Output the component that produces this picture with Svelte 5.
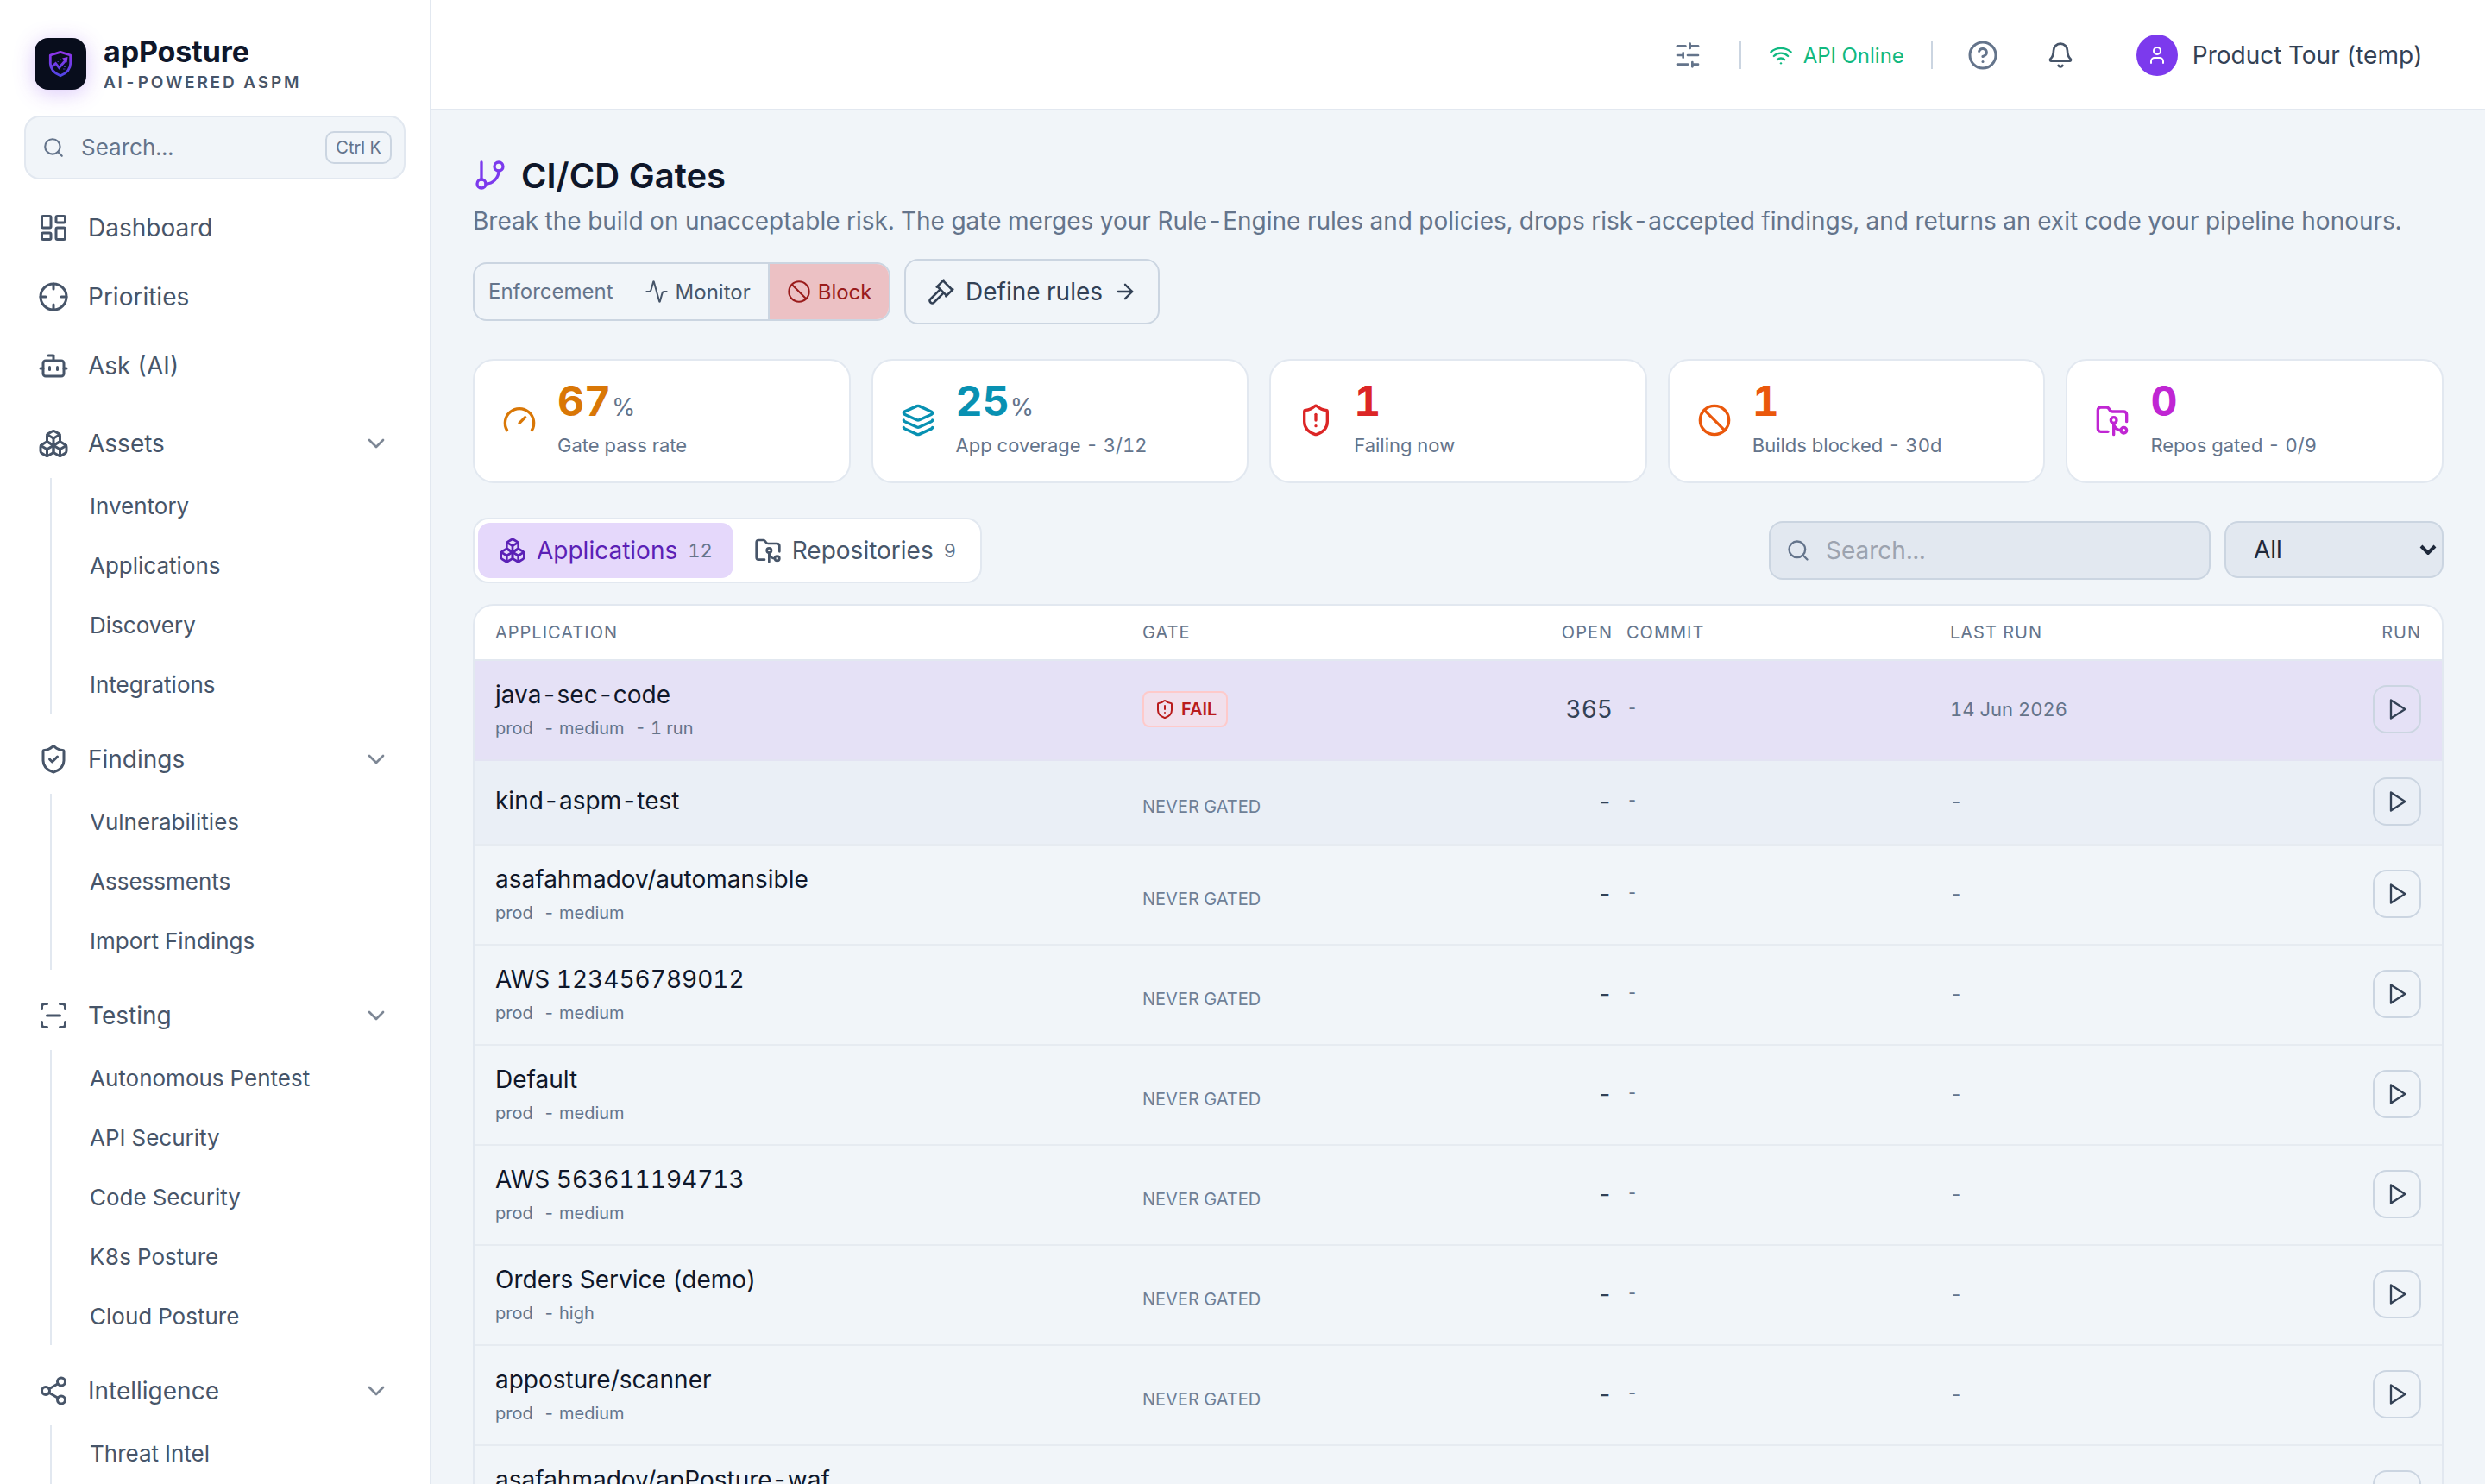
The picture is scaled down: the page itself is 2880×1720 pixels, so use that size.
<script lang="ts">
	type IconDef = string[];

	const SHIELD =
		'M20 13c0 5-3.5 7.5-7.66 8.95a1 1 0 0 1-.67-.01C7.5 20.5 4 18 4 13V6a1 1 0 0 1 1-1c2 0 4.5-1.2 6.24-2.72a1.17 1.17 0 0 1 1.52 0C14.51 3.81 17 5 19 5a1 1 0 0 1 1 1z';

	const circle = (cx: number, cy: number, r: number) =>
		`M${cx - r} ${cy}a${r} ${r} 0 1 0 ${2 * r} 0a${r} ${r} 0 1 0 ${-2 * r} 0`;

	const icons: Record<string, IconDef> = {
		search: [circle(11, 11, 8), 'm21 21-4.3-4.3'],
		dashboard: [
			'M4 3h5a1 1 0 0 1 1 1v7a1 1 0 0 1-1 1H4a1 1 0 0 1-1-1V4a1 1 0 0 1 1-1z',
			'M15 3h5a1 1 0 0 1 1 1v3a1 1 0 0 1-1 1h-5a1 1 0 0 1-1-1V4a1 1 0 0 1 1-1z',
			'M15 12h5a1 1 0 0 1 1 1v7a1 1 0 0 1-1 1h-5a1 1 0 0 1-1-1v-7a1 1 0 0 1 1-1z',
			'M4 16h5a1 1 0 0 1 1 1v3a1 1 0 0 1-1 1H4a1 1 0 0 1-1-1v-3a1 1 0 0 1 1-1z'
		],
		crosshair: [circle(12, 12, 10), 'M22 12h-4', 'M6 12H2', 'M12 6V2', 'M12 22v-4'],
		bot: [
			'M12 8V4H8',
			'M6 8h12a2 2 0 0 1 2 2v8a2 2 0 0 1-2 2H6a2 2 0 0 1-2-2v-8a2 2 0 0 1 2-2z',
			'M2 14h2',
			'M20 14h2',
			'M15 13v2',
			'M9 13v2'
		],
		boxes: [
			'M2.97 12.92A2 2 0 0 0 2 14.63v3.24a2 2 0 0 0 .97 1.71l3 1.8a2 2 0 0 0 2.06 0L12 19v-5.5l-5-3-4.03 2.42Z',
			'm7 16.5-4.74-2.85',
			'm7 16.5 5-3',
			'M7 16.5v5.17',
			'M12 13.5V19l3.97 2.38a2 2 0 0 0 2.06 0l3-1.8a2 2 0 0 0 .97-1.71v-3.24a2 2 0 0 0-.97-1.71L17 10.5l-5 3Z',
			'm17 16.5-5-3',
			'm17 16.5 4.74-2.85',
			'M17 16.5v5.17',
			'M7.97 4.42A2 2 0 0 0 7 6.13v4.37l5 3 5-3V6.13a2 2 0 0 0-.97-1.71l-3-1.8a2 2 0 0 0-2.06 0l-3 1.8Z',
			'M12 8 7.26 5.15',
			'm12 8 4.74-2.85',
			'M12 13.5V8'
		],
		shieldCheck: [SHIELD, 'm9 12 2 2 4-4'],
		shieldAlert: [SHIELD, 'M12 8v4', 'M12 16h.01'],
		scan: [
			'M3 7V5a2 2 0 0 1 2-2h2',
			'M17 3h2a2 2 0 0 1 2 2v2',
			'M21 17v2a2 2 0 0 1-2 2h-2',
			'M7 21H5a2 2 0 0 1-2-2v-2',
			'M7 12h10'
		],
		share: [
			circle(18, 5, 3),
			circle(6, 12, 3),
			circle(18, 19, 3),
			'M8.59 13.51l6.83 3.98',
			'M15.41 6.51l-6.82 3.98'
		],
		chevronDown: ['m6 9 6 6 6-6'],
		sliders: ['M21 4h-7', 'M10 4H3', 'M21 12h-9', 'M8 12H3', 'M21 20h-5', 'M12 20H3', 'M14 2v4', 'M8 10v4', 'M16 18v4'],
		wifi: ['M12 20h.01', 'M2 8.82a15 15 0 0 1 20 0', 'M5 12.859a10 10 0 0 1 14 0', 'M8.5 16.429a5 5 0 0 1 7 0'],
		help: [circle(12, 12, 10), 'M9.09 9a3 3 0 0 1 5.83 1c0 2-3 3-3 3', 'M12 17h.01'],
		bell: [
			'M10.268 21a2 2 0 0 0 3.464 0',
			'M3.262 15.326A1 1 0 0 0 4 17h16a1 1 0 0 0 .74-1.673C19.41 13.956 18 12.499 18 8A6 6 0 0 0 6 8c0 4.499-1.411 5.956-2.738 7.326'
		],
		user: ['M19 21v-2a4 4 0 0 0-4-4H9a4 4 0 0 0-4 4v2', circle(12, 7, 4)],
		branch: ['M6 3v12', circle(18, 6, 3), circle(6, 18, 3), 'M18 9a9 9 0 0 1-9 9'],
		activity: [
			'M22 12h-2.48a2 2 0 0 0-1.93 1.46l-2.35 8.36a.25.25 0 0 1-.48 0L9.24 2.18a.25.25 0 0 0-.48 0l-2.35 8.36A2 2 0 0 1 4.49 12H2'
		],
		ban: [circle(12, 12, 10), 'm4.9 4.9 14.2 14.2'],
		gavel: [
			'm14 13-8.381 8.38a1 1 0 0 1-3.001-3l8.384-8.381',
			'm16 16 6-6',
			'm21.5 10.5-8-8',
			'm8 8 6-6',
			'm8.5 7.5 8 8'
		],
		arrowRight: ['M5 12h14', 'm12 5 7 7-7 7'],
		gauge: ['m12 14 4-4', 'M3.34 19a10 10 0 1 1 17.32 0'],
		layers: [
			'M12.83 2.18a2 2 0 0 0-1.66 0L2.6 6.08a1 1 0 0 0 0 1.83l8.58 3.91a2 2 0 0 0 1.66 0l8.58-3.9a1 1 0 0 0 0-1.83z',
			'M2 12a1 1 0 0 0 .58.91l8.6 3.91a2 2 0 0 0 1.65 0l8.58-3.9A1 1 0 0 0 22 12',
			'M2 17a1 1 0 0 0 .58.91l8.6 3.91a2 2 0 0 0 1.65 0l8.58-3.9A1 1 0 0 0 22 17'
		],
		folderGit: [
			'M9 20H4a2 2 0 0 1-2-2V5a2 2 0 0 1 2-2h3.9a2 2 0 0 1 1.69.9l.81 1.2a2 2 0 0 0 1.67.9H20a2 2 0 0 1 2 2v5',
			circle(13, 12, 2),
			'M18 19c-2.8 0-5-2.2-5-5v8',
			circle(20, 19, 2)
		],
		play: ['M6 3l14 9-14 9z']
	};

	const topLinks = [
		{ label: 'Dashboard', icon: 'dashboard' },
		{ label: 'Priorities', icon: 'crosshair' },
		{ label: 'Ask (AI)', icon: 'bot' }
	];

	const groups = [
		{ label: 'Assets', icon: 'boxes', items: ['Inventory', 'Applications', 'Discovery', 'Integrations'] },
		{ label: 'Findings', icon: 'shieldCheck', items: ['Vulnerabilities', 'Assessments', 'Import Findings'] },
		{
			label: 'Testing',
			icon: 'scan',
			items: ['Autonomous Pentest', 'API Security', 'Code Security', 'K8s Posture', 'Cloud Posture']
		},
		{ label: 'Intelligence', icon: 'share', items: ['Threat Intel'] }
	];

	const stats = [
		{ value: '67', unit: '%', label: 'Gate pass rate', icon: 'gauge', tone: 'amber' },
		{ value: '25', unit: '%', label: 'App coverage - 3/12', icon: 'layers', tone: 'cyan' },
		{ value: '1', unit: '', label: 'Failing now', icon: 'shieldAlert', tone: 'red' },
		{ value: '1', unit: '', label: 'Builds blocked - 30d', icon: 'ban', tone: 'orange' },
		{ value: '0', unit: '', label: 'Repos gated - 0/9', icon: 'folderGit', tone: 'fuchsia' }
	];

	type AppRow = {
		name: string;
		meta: string[];
		failed?: boolean;
		open?: string;
		lastRun?: string;
	};

	const rows: AppRow[] = [
		{ name: 'java-sec-code', meta: ['prod', '- medium', '- 1 run'], failed: true, open: '365', lastRun: '14 Jun 2026' },
		{ name: 'kind-aspm-test', meta: [] },
		{ name: 'asafahmadov/automansible', meta: ['prod', '- medium'] },
		{ name: 'AWS 123456789012', meta: ['prod', '- medium'] },
		{ name: 'Default', meta: ['prod', '- medium'] },
		{ name: 'AWS 563611194713', meta: ['prod', '- medium'] },
		{ name: 'Orders Service (demo)', meta: ['prod', '- high'] },
		{ name: 'apposture/scanner', meta: ['prod', '- medium'] },
		{ name: 'asafahmadov/apPosture-waf', meta: ['prod', '- medium'] }
	];

	let selected = $state(0);
	let tab = $state('applications');
</script>

{#snippet icon(name: string, size: number, stroke = 2)}
	<svg
		class="icon"
		width={size}
		height={size}
		viewBox="0 0 24 24"
		fill="none"
		stroke="currentColor"
		stroke-width={stroke}
		stroke-linecap="round"
		stroke-linejoin="round"
		aria-hidden="true"
	>
		{#each icons[name] as d}
			<path {d} />
		{/each}
	</svg>
{/snippet}

<div class="shell">
	<aside class="sidebar">
		<div class="brand">
			<div class="brand-mark">
				<svg width="60" height="60" viewBox="0 0 60 60" fill="none" aria-hidden="true">
					<defs>
						<linearGradient id="mark" x1="30" y1="15" x2="30" y2="45" gradientUnits="userSpaceOnUse">
							<stop offset="0" stop-color="#9333ea" />
							<stop offset="1" stop-color="#4f46e5" />
						</linearGradient>
					</defs>
					<path
						d="M30 16.3 41.7 20v9.5c0 6.8-4.6 11.3-11.7 14.3-7.1-3-11.7-7.5-11.7-14.3V20z"
						stroke="url(#mark)"
						stroke-width="2.8"
						stroke-linejoin="round"
					/>
					<path d="m20 33.5 4.5-4 4 5 7.5-8.5" stroke="url(#mark)" stroke-width="2.8" />
					<path d="m32 23.5 6.5-1.5-1 6.5z" fill="#8b3cf0" />
					<path d="M26.5 27.5H28m1.5-2.5H31m3 8.5h3m-4 2.5h2.5" stroke="#4338a8" stroke-width="1.2" />
				</svg>
			</div>
			<div class="brand-text">
				<div class="brand-name">apPosture</div>
				<div class="brand-sub">AI-POWERED ASPM</div>
			</div>
		</div>

		<button class="side-search">
			{@render icon('search', 26)}
			<span class="side-search-label">Search...</span>
			<kbd>Ctrl K</kbd>
		</button>

		<nav class="nav">
			{#each topLinks as link}
				<a class="nav-item" href="#top">
					{@render icon(link.icon, 36)}
					<span>{link.label}</span>
				</a>
			{/each}

			{#each groups as group}
				<div class="nav-group">
					<button class="nav-item">
						{@render icon(group.icon, 36)}
						<span>{group.label}</span>
						<span class="nav-chevron">{@render icon('chevronDown', 32)}</span>
					</button>
					<div class="nav-list">
						{#each group.items as item}
							<a class="nav-sub" href="#top">{item}</a>
						{/each}
					</div>
				</div>
			{/each}
		</nav>
	</aside>

	<div class="content">
		<header class="topbar">
			<button class="bar-btn" aria-label="Preferences">{@render icon('sliders', 32)}</button>
			<span class="bar-sep"></span>
			<span class="api-status">
				{@render icon('wifi', 28)}
				API Online
			</span>
			<span class="bar-sep"></span>
			<button class="bar-btn help" aria-label="Help">{@render icon('help', 36)}</button>
			<button class="bar-btn bell" aria-label="Notifications">{@render icon('bell', 32)}</button>
			<div class="account">
				<span class="avatar">{@render icon('user', 24)}</span>
				<span>Product Tour (temp)</span>
			</div>
		</header>

		<main class="page">
			<h1 class="title">
				<span class="title-icon">{@render icon('branch', 40)}</span>
				CI/CD Gates
			</h1>
			<p class="lead">
				Break the build on unacceptable risk. The gate merges your Rule-Engine rules and policies, drops
				risk-accepted findings, and returns an exit code your pipeline honours.
			</p>

			<div class="actions">
				<div class="enforce">
					<span class="enforce-label">Enforcement</span>
					<button class="enforce-btn">{@render icon('activity', 28, 1.75)} Monitor</button>
					<button class="enforce-btn enforce-block">{@render icon('ban', 28, 1.75)} Block</button>
				</div>
				<button class="define">
					{@render icon('gavel', 32, 1.9)}
					<span>Define rules</span>
					{@render icon('arrowRight', 28)}
				</button>
			</div>

			<section class="stats">
				{#each stats as stat}
					<div class="stat">
						<span class={stat.tone}>{@render icon(stat.icon, 40)}</span>
						<div>
							<div class="stat-value {stat.tone}">{stat.value}<span class="stat-unit">{stat.unit}</span></div>
							<div class="stat-label">{stat.label}</div>
						</div>
					</div>
				{/each}
			</section>

			<div class="toolbar">
				<div class="tabs">
					<button class="tab" class:active={tab === 'applications'} onclick={() => (tab = 'applications')}>
						{@render icon('boxes', 32)}
						Applications <span class="tab-count">12</span>
					</button>
					<button class="tab" class:active={tab === 'repositories'} onclick={() => (tab = 'repositories')}>
						{@render icon('folderGit', 32)}
						Repositories <span class="tab-count">9</span>
					</button>
				</div>
				<div class="filters">
					<label class="filter-search">
						{@render icon('search', 28)}
						<input type="text" placeholder="Search..." />
					</label>
					<button class="filter-select">
						<span>All</span>
						<svg width="20" height="12" viewBox="0 0 20 12" fill="none" aria-hidden="true">
							<path d="m2 2 8 8 8-8" stroke="currentColor" stroke-width="4" />
						</svg>
					</button>
				</div>
			</div>

			<div class="table">
				<div class="row head">
					<span>Application</span>
					<span>Gate</span>
					<span class="right">Open</span>
					<span class="commit">Commit</span>
					<span>Last run</span>
					<span class="right">Run</span>
				</div>
				{#each rows as row, i}
					<div class="row body" class:selected={selected === i} class:hovered={i === 1} class:short={!row.meta.length}>
						<div class="app">
							<div class="app-name">{row.name}</div>
							{#if row.meta.length}
								<div class="app-meta">
									{#each row.meta as part}
										<span>{part}</span>
									{/each}
								</div>
							{/if}
						</div>
						<div>
							{#if row.failed}
								<span class="badge-fail">{@render icon('shieldAlert', 24)} FAIL</span>
							{:else}
								<span class="never">NEVER GATED</span>
							{/if}
						</div>
						<div class="right open">{row.open ?? '-'}</div>
						<div class="commit commit-value">-</div>
						<div class="date">{row.lastRun ?? '-'}</div>
						<div class="right">
							<button class="run" aria-label={`Run gate for ${row.name}`} onclick={() => (selected = i)}>
								{@render icon('play', 28)}
							</button>
						</div>
					</div>
				{/each}
			</div>
		</main>
	</div>
</div>

<style>
	:global(body) {
		margin: 0;
		background: #f1f5f9;
	}

	.shell {
		display: flex;
		width: 2880px;
		height: 1720px;
		overflow: hidden;
		font-family: Inter, 'Liberation Sans', sans-serif;
		font-size: 28px;
		font-variant-numeric: tabular-nums;
		color: #0f172a;
		background: #f1f5f9;
	}

	button {
		font: inherit;
		font-variant-numeric: inherit;
		color: inherit;
		background: none;
		border: 0;
		padding: 0;
		margin: 0;
		white-space: nowrap;
		cursor: pointer;
	}

	.icon {
		display: block;
		flex: none;
	}

	/* sidebar */
	.sidebar {
		box-sizing: border-box;
		flex: none;
		width: 500px;
		height: 100%;
		padding: 44px 28px 0;
		background: #fff;
		border-right: 2px solid #e2e8f0;
		overflow: hidden;
	}

	.brand {
		display: flex;
		gap: 20px;
		height: 90px;
		padding-left: 12px;
	}

	.brand-mark {
		width: 60px;
		height: 60px;
		border-radius: 16px;
		background: #080d1c;
		box-shadow: 0 4px 24px rgba(124, 58, 237, 0.28);
	}

	.brand-name {
		height: 38px;
		margin-top: -3px;
		font-size: 34px;
		line-height: 38px;
		font-weight: 700;
		letter-spacing: -0.1px;
	}

	.brand-sub {
		margin-top: 5px;
		font-size: 19px;
		line-height: 24px;
		font-weight: 600;
		letter-spacing: 2.8px;
		color: #475569;
	}

	.side-search {
		box-sizing: border-box;
		display: flex;
		align-items: center;
		width: 442px;
		height: 74px;
		padding: 0 14px 0 19px;
		border: 2px solid #e2e8f0;
		border-radius: 18px;
		background: #f1f5f9;
		color: #64748b;
		font-size: 26px;
	}

	.side-search-label {
		margin-left: 19px;
		margin-right: auto;
		padding-bottom: 2px;
	}

	kbd {
		box-sizing: border-box;
		height: 38px;
		padding: 0 10px;
		border: 2px solid #cbd5e1;
		border-radius: 10px;
		font-family: inherit;
		font-size: 20px;
		line-height: 35px;
	}

	.nav {
		padding-top: 16px;
	}

	.nav-item {
		display: flex;
		align-items: center;
		gap: 22px;
		width: 426px;
		height: 80px;
		padding-left: 16px;
		color: #475569;
		text-decoration: none;
	}

	.nav-group {
		margin-top: 10px;
		padding-bottom: 3px;
	}

	.nav-chevron {
		margin-left: auto;
		margin-right: 2px;
		opacity: 0.7;
	}

	.nav-list {
		display: flex;
		flex-direction: column;
		gap: 3px;
		margin-left: 30px;
		padding-left: 44px;
		border-left: 2px solid #e2e8f0;
	}

	.nav-group:last-child .nav-list {
		min-height: 140px;
	}

	.nav-sub {
		height: 66px;
		font-size: 26px;
		line-height: 65px;
		color: #475569;
		text-decoration: none;
	}

	/* top bar */
	.content {
		flex: 1;
		min-width: 0;
	}

	.topbar {
		box-sizing: border-box;
		display: flex;
		align-items: center;
		justify-content: flex-end;
		height: 128px;
		padding: 2px 72px 0 0;
		background: #fff;
		border-bottom: 2px solid #e2e8f0;
	}

	.bar-btn {
		display: flex;
		color: #64748b;
	}

	.bar-sep {
		width: 2px;
		height: 32px;
		margin-left: 44px;
		background: #cbd5e1;
	}

	.api-status {
		display: flex;
		align-items: center;
		gap: 12px;
		margin: 0 -13px 0 32px;
		font-size: 24px;
		color: #10b981;
	}

	.help {
		margin-left: 40px;
	}

	.bell {
		margin-left: 56px;
		color: #475569;
	}

	.account {
		display: flex;
		align-items: center;
		gap: 17px;
		margin-left: 72px;
		color: #334155;
	}

	.avatar {
		display: grid;
		place-items: center;
		width: 48px;
		height: 48px;
		border-radius: 50%;
		background: #7c3aed;
		color: #fff;
	}

	/* page */
	.page {
		padding: 48px 48px 0;
	}

	.title {
		display: flex;
		align-items: center;
		gap: 16px;
		height: 54px;
		margin: 0;
		font-size: 40px;
		font-weight: 600;
	}

	.title-icon {
		color: #7c3aed;
	}

	.lead {
		margin: 6px 0 0;
		line-height: 40px;
		color: #64748b;
		white-space: nowrap;
	}

	.actions {
		display: flex;
		align-items: center;
		gap: 16px;
		height: 76px;
		margin-top: 24px;
	}

	.enforce {
		box-sizing: border-box;
		display: flex;
		width: 484px;
		height: 68px;
		border: 2px solid #cbd5e1;
		border-radius: 16px;
		overflow: hidden;
		font-size: 24px;
	}

	.enforce-label {
		padding: 0 16px;
		line-height: 64px;
		color: #64748b;
	}

	.enforce-btn {
		display: flex;
		align-items: center;
		gap: 8px;
		padding: 0 20px;
		color: #475569;
	}

	.enforce-block {
		flex: 1;
		border-left: 2px solid #cbd5e1;
		background: #ecc1c4;
		color: #991b1b;
	}

	.define {
		box-sizing: border-box;
		display: flex;
		align-items: center;
		width: 296px;
		height: 76px;
		padding: 0 24px 0 25px;
		border: 2px solid #cbd5e1;
		border-radius: 16px;
		color: #334155;
	}

	.define span {
		margin: 0 12px;
	}

	.stats {
		display: grid;
		grid-template-columns: repeat(5, 1fr);
		gap: 24px;
		margin-top: 40px;
	}

	.stat {
		box-sizing: border-box;
		display: flex;
		align-items: center;
		gap: 24px;
		height: 144px;
		padding: 0 32px 2px;
		border: 2px solid #e2e8f0;
		border-radius: 24px;
		background: #fff;
	}

	.stat-value {
		height: 56px;
		margin-top: -5px;
		font-size: 48px;
		line-height: 56px;
		font-weight: 700;
	}

	.stat-unit {
		margin-left: 1px;
		font-size: 28px;
		font-weight: 400;
		color: #64748b;
	}

	.stat-label {
		margin-top: 6px;
		font-size: 22px;
		line-height: 34px;
		color: #64748b;
	}

	.amber {
		color: #d97706;
	}

	.cyan {
		color: #0891b2;
	}

	.red {
		color: #dc2626;
	}

	.orange {
		color: #ea580c;
	}

	.fuchsia {
		color: #c026d3;
	}

	/* toolbar */
	.toolbar {
		display: flex;
		justify-content: space-between;
		margin-top: 40px;
	}

	.tabs {
		box-sizing: border-box;
		display: flex;
		height: 76px;
		padding: 4px;
		border: 2px solid #e2e8f0;
		border-radius: 18px;
		background: #fff;
	}

	.tab {
		display: flex;
		align-items: center;
		gap: 12px;
		height: 64px;
		padding: 0 24px;
		border-radius: 14px;
		color: #475569;
	}

	.tab.active {
		background: #e5d8fb;
		color: #5b21b6;
	}

	.tab-count {
		font-size: 22px;
		color: #64748b;
	}

	.filters {
		display: flex;
		gap: 16px;
		padding-top: 4px;
	}

	.filter-search,
	.filter-select {
		box-sizing: border-box;
		display: flex;
		align-items: center;
		border: 2px solid #cbd5e1;
		border-radius: 16px;
		background: #e2e8f0;
	}

	.filter-search {
		gap: 18px;
		width: 512px;
		height: 68px;
		padding: 0 18px;
		color: #64748b;
	}

	.filter-search input {
		width: 400px;
		padding: 0;
		border: 0;
		outline: 0;
		background: none;
		font: inherit;
	}

	.filter-search input::placeholder {
		color: #9ca3af;
	}

	.filter-select {
		justify-content: space-between;
		width: 254px;
		height: 66px;
		padding: 0 6px 0 32px;
		color: #1e293b;
	}

	/* table */
	.table {
		margin-top: 24px;
		border: 2px solid #e2e8f0;
		border-radius: 24px 24px 0 0;
		overflow: hidden;
	}

	.row {
		box-sizing: border-box;
		display: grid;
		grid-template-columns: 750px 374px 171px 391px 1fr auto;
		align-items: center;
		padding: 0 24px 2px;
	}

	.head {
		height: 64px;
		padding-bottom: 0;
		border-bottom: 2px solid #e2e8f0;
		background: #fff;
		font-size: 20px;
		letter-spacing: 1px;
		text-transform: uppercase;
		color: #64748b;
	}

	.body {
		height: 116px;
		border-bottom: 2px solid #e6ebf1;
	}

	.body.short {
		height: 98px;
	}

	.body.short .app {
		padding-bottom: 3px;
	}

	.body.hovered {
		background: #eaeff6;
	}

	.body.selected {
		background: #e5e1f6;
		border-bottom-color: #e3e3f3;
	}

	.right {
		text-align: right;
	}

	.commit {
		padding-left: 16px;
	}

	.app-name {
		line-height: 42px;
	}

	.app-meta {
		display: flex;
		gap: 12px;
		margin-top: 2px;
		font-size: 20px;
		line-height: 32px;
		color: #64748b;
	}

	.badge-fail {
		box-sizing: border-box;
		display: inline-flex;
		align-items: center;
		gap: 7px;
		height: 42px;
		padding: 0 11px 0 12px;
		border: 2px solid #fecaca;
		border-radius: 8px;
		background: #f1e0ec;
		font-size: 20px;
		font-weight: 600;
		color: #b91c1c;
	}

	.never {
		position: relative;
		top: 3px;
		font-size: 20px;
		color: #6f7f96;
	}

	.open {
		color: #334155;
	}

	.commit-value {
		padding-bottom: 2px;
		font-family: 'Liberation Mono', monospace;
		font-size: 22px;
		color: #64748b;
	}

	.date {
		padding-bottom: 1px;
		font-size: 22px;
		color: #64748b;
	}

	.run {
		box-sizing: border-box;
		display: grid;
		place-items: center;
		width: 56px;
		height: 56px;
		border: 2px solid #cbd5e1;
		border-radius: 16px;
		color: #334155;
	}
</style>
